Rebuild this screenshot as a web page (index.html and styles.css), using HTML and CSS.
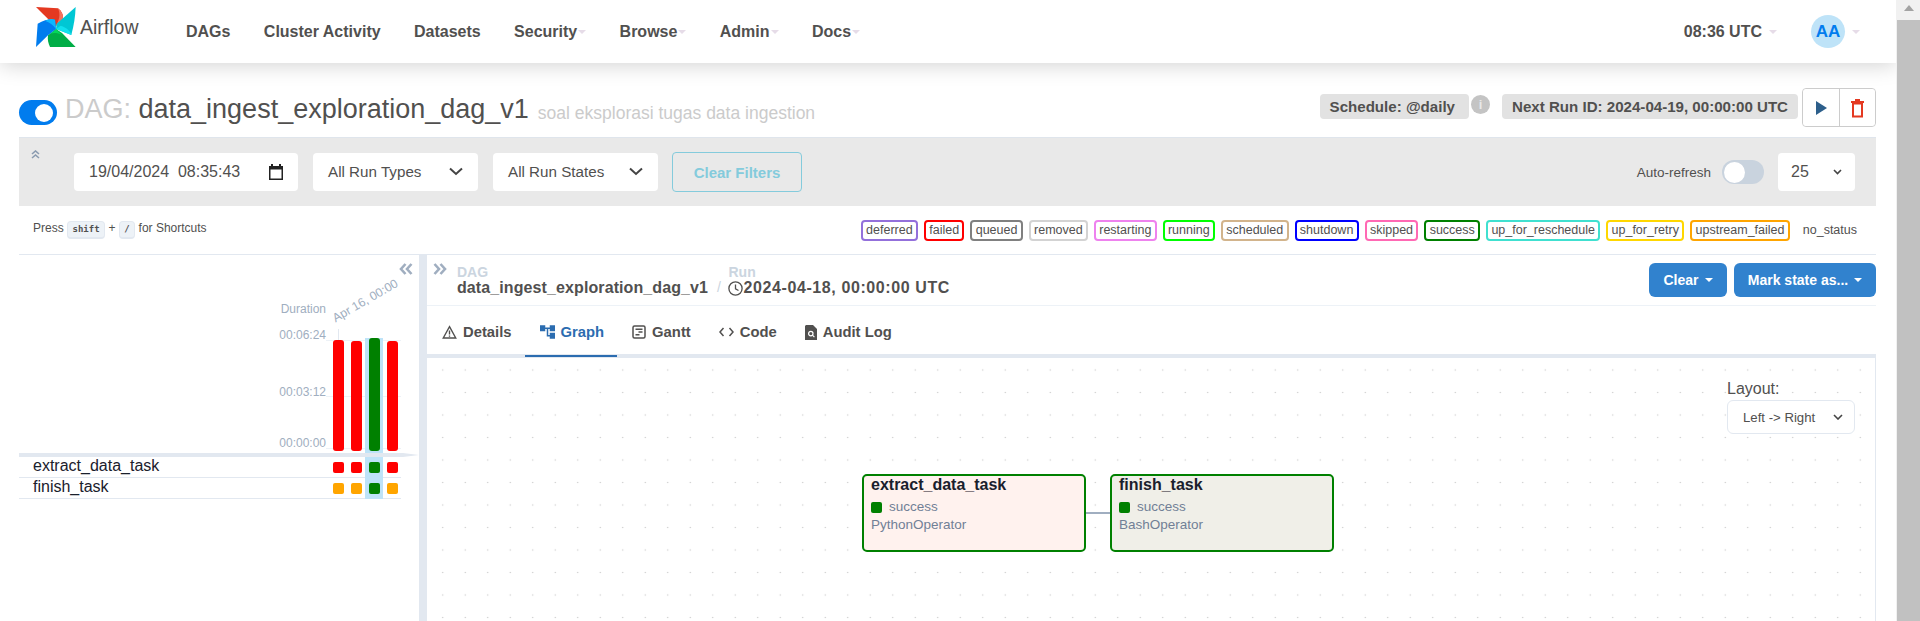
FILE: index.html
```html
<!DOCTYPE html>
<html lang="en">

<head>
  <meta charset="UTF-8">
  <title>Airflow - data_ingest_exploration_dag_v1</title>
  <link rel="stylesheet" href="styles.css">
</head>

<body>
  <div class="page">
    <!-- Top navigation -->
    <nav class="navbar">
      <a class="brand">
        <svg class="logo" viewBox="0 0 120 120">
          <path d="M0 0 L66 4 C76 12 82 22 81 32 C76 44 68 52 58 58 Z" fill="#e43921" />
          <path d="M66 4 C76 12 82 22 81 32 C76 44 68 52 58 58 C70 42 74 22 66 4 Z" fill="#f4725f" />
          <path d="M119 0 L62 50 L60 66 L106 84 C114 54 118 26 119 0 Z" fill="#00c7d4" />
          <path d="M60 66 L106 84 C104 72 92 62 74 56 Z" fill="#11e1ee" />
          <path d="M119 120 L78 78 L60 66 L36 85 C34 98 37 110 42 120 Z" fill="#00ad46" />
          <path d="M60 66 L36 85 C46 76 62 76 78 84 Z" fill="#04d659" />
          <path d="M0 120 L5 50 C25 38 45 35 57 38 L60 66 L36 85 Z" fill="#017cee" />
          <path d="M28 42 C38 36 50 35 57 38 L60 66 C52 54 40 46 28 42 Z" fill="#0cb6ff" />
        </svg>
        <span>Airflow</span>
      </a>
      <ul class="nav-links">
        <li>DAGs</li>
        <li>Cluster Activity</li>
        <li>Datasets</li>
        <li>Security<i class="caret"></i></li>
        <li>Browse<i class="caret"></i></li>
        <li>Admin<i class="caret"></i></li>
        <li>Docs<i class="caret"></i></li>
      </ul>
      <div class="nav-right">
        <span class="clock">08:36 UTC<i class="caret wide"></i></span>
        <span class="avatar">AA</span><i class="caret wide"></i>
      </div>
    </nav>

    <div class="content">
      <!-- DAG title row -->
      <header class="dag-title">
        <span class="switch on"><i></i></span>
        <h3><span class="muted">DAG:</span> data_ingest_exploration_dag_v1</h3>
        <span class="description">soal eksplorasi tugas data ingestion</span>
        <div class="dag-actions">
          <span class="badge schedule">Schedule: @daily</span>
          <span class="info">i</span>
          <span class="badge">Next Run ID: 2024-04-19, 00:00:00 UTC</span>
          <div class="btn-group">
            <button>
              <svg width="13" height="16" viewBox="0 0 13 16"><path d="M1 1 L12 8 L1 15 Z" fill="#2d5f8b" /></svg>
            </button>
            <button>
              <svg width="15" height="20" viewBox="0 0 15 20" fill="none" stroke="#e43921" stroke-width="2">
                <path d="M3 5.5 V18.5 H12 V5.5 Z M1 4 H14" />
                <path d="M5 2 H10" />
              </svg>
            </button>
          </div>
        </div>
      </header>

      <!-- Filters -->
      <section class="filters">
        <svg class="filters-toggle" width="9" height="9" viewBox="0 0 9 9" fill="none" stroke="#8a9bb0" stroke-width="1.6">
          <path d="M1 4 L4.5 1 L8 4 M1 8 L4.5 5 L8 8" />
        </svg>
        <div class="field date-field">
          <span>19/04/2024&nbsp; 08:35:43</span>
          <svg width="14" height="16" viewBox="0 0 14 16">
            <path d="M2 0 H4 V2 H10 V0 H12 V2 H14 V16 H0 V2 H2 Z M1.5 5.5 V14.5 H12.5 V5.5 Z" fill="#222" />
          </svg>
        </div>
        <div class="field select-field"><span>All Run Types</span><svg class="chevron" width="14" height="9" viewBox="0 0 14 9"><path d="M1 1.5 L7 7 L13 1.5" /></svg></div>
        <div class="field select-field"><span>All Run States</span><svg class="chevron" width="14" height="9" viewBox="0 0 14 9"><path d="M1 1.5 L7 7 L13 1.5" /></svg></div>
        <button class="clear-filters">Clear Filters</button>
        <div class="filters-right">
          <span class="refresh-label">Auto-refresh</span>
          <span class="switch"><i></i></span>
          <div class="field count-field"><span>25</span><svg class="chevron small" width="9" height="6" viewBox="0 0 9 6"><path d="M1 1 L4.5 4.5 L8 1" /></svg></div>
        </div>
      </section>

      <!-- Shortcuts and state legend -->
      <section class="legend-row">
        <div class="shortcuts">Press <kbd>shift</kbd> + <kbd>/</kbd> for Shortcuts</div>
        <ul class="legend">
          <li style="border-color: mediumpurple">deferred</li>
          <li style="border-color: red">failed</li>
          <li style="border-color: gray">queued</li>
          <li style="border-color: lightgrey">removed</li>
          <li style="border-color: violet">restarting</li>
          <li style="border-color: lime">running</li>
          <li style="border-color: tan">scheduled</li>
          <li style="border-color: blue">shutdown</li>
          <li style="border-color: hotpink">skipped</li>
          <li style="border-color: green">success</li>
          <li style="border-color: turquoise">up_for_reschedule</li>
          <li style="border-color: gold">up_for_retry</li>
          <li style="border-color: orange">upstream_failed</li>
          <li class="no-status">no_status</li>
        </ul>
      </section>

      <main class="workspace">
        <!-- Left: grid of runs -->
        <aside class="grid-panel">
          <div class="chart">
            <svg class="collapse" width="14" height="12" viewBox="0 0 14 12" fill="none" stroke="#a0aec0" stroke-width="2.6">
              <path d="M6.5 1 L2 6 L6.5 11 M12.5 1 L8 6 L12.5 11" />
            </svg>
            <span class="run-date">Apr 16, 00:00</span>
            <i class="run-tick"></i>
            <div class="axis">
              <span class="axis-title">Duration</span>
              <span class="axis-top">00:06:24</span>
              <span class="axis-mid">00:03:12</span>
              <span class="axis-low">00:00:00</span>
            </div>
            <div class="bars">
              <i class="gridline one"></i><i class="gridline two"></i><i class="gridline three"></i>
              <div class="bar-col"><i class="bar failed" style="height: 111px"></i></div>
              <div class="bar-col"><i class="bar failed" style="height: 110px"></i></div>
              <div class="bar-col selected"><i class="bar success" style="height: 113px"></i></div>
              <div class="bar-col"><i class="bar failed" style="height: 110px"></i></div>
            </div>
          </div>
          <div class="chart-rule"></div>
          <div class="task-row">
            <span class="task-name">extract_data_task</span>
            <div class="cell"><i class="square failed"></i></div>
            <div class="cell"><i class="square failed"></i></div>
            <div class="cell selected"><i class="square success"></i></div>
            <div class="cell"><i class="square failed"></i></div>
          </div>
          <div class="task-row">
            <span class="task-name">finish_task</span>
            <div class="cell"><i class="square upstream"></i></div>
            <div class="cell"><i class="square upstream"></i></div>
            <div class="cell selected"><i class="square success"></i></div>
            <div class="cell"><i class="square upstream"></i></div>
          </div>
        </aside>

        <div class="divider"></div>

        <!-- Right: details -->
        <section class="details">
          <div class="breadcrumb-row">
            <svg class="expand" width="14" height="12" viewBox="0 0 14 12" fill="none" stroke="#a0aec0" stroke-width="2.6">
              <path d="M1.5 1 L6 6 L1.5 11 M7.5 1 L12 6 L7.5 11" />
            </svg>
            <div class="crumb">
              <span class="crumb-label">DAG</span>
              <span class="crumb-value">data_ingest_exploration_dag_v1</span>
            </div>
            <span class="crumb-slash">/</span>
            <div class="crumb">
              <span class="crumb-label">Run</span>
              <span class="crumb-value with-icon">
                <svg width="15" height="15" viewBox="0 0 15 15" fill="none" stroke="#51504f" stroke-width="1.3">
                  <circle cx="7.5" cy="7.5" r="6.6" />
                  <path d="M7.5 3.5 V7.8 L10.5 9.5" />
                </svg>2024-04-18, 00:00:00 UTC</span>
            </div>
            <div class="run-actions">
              <button class="btn-blue clear-btn">Clear<i class="caret white"></i></button>
              <button class="btn-blue mark-btn">Mark state as...<i class="caret white"></i></button>
            </div>
          </div>

          <div class="tabs">
            <a class="tab">
              <svg width="15" height="14" viewBox="0 0 24 22" fill="none" stroke="currentColor" stroke-width="2.2">
                <path d="M12 2.5 L22 20.5 H2 Z" />
                <path d="M12 8.5 V15 M12 16.5 V18.5" />
              </svg>Details</a>
            <a class="tab active">
              <svg width="15" height="14" viewBox="2 3 20 18" fill="currentColor">
                <path d="M22 11V3h-7v3H9V3H2v8h7V8h2v10h4v3h7v-8h-7v3h-2V8h2v3z" />
              </svg>Graph</a>
            <a class="tab">
              <svg width="14" height="14" viewBox="0 0 14 14" fill="none" stroke="currentColor" stroke-width="1.5">
                <rect x="1" y="1" width="12" height="12" rx="1.5" />
                <path d="M3.5 4.3 H10.5 M6.5 7 H10.5 M3.5 9.7 H7.5" />
              </svg>Gantt</a>
            <a class="tab">
              <svg width="15" height="12" viewBox="0 0 15 12" fill="none" stroke="currentColor" stroke-width="1.5">
                <path d="M4.5 2 L1 6 L4.5 10 M10.5 2 L14 6 L10.5 10" />
              </svg>Code</a>
            <a class="tab">
              <svg width="12" height="15" viewBox="0 0 12 15">
                <path d="M1 0 H8 L12 4 V15 H0 V1 Z" fill="currentColor" />
                <circle cx="5.8" cy="8.6" r="2.2" fill="none" stroke="#fff" stroke-width="1.2" />
                <path d="M7.4 10.2 L9.4 12.2" stroke="#fff" stroke-width="1.2" />
              </svg>Audit Log</a>
          </div>

          <div class="canvas">
            <div class="layout-control">
              <label>Layout:</label>
              <div class="field layout-select"><span>Left -&gt; Right</span><svg class="chevron small" width="10" height="6" viewBox="0 0 10 6"><path d="M1 1 L5 5 L9 1" /></svg></div>
            </div>
            <div class="node python-node">
              <b>extract_data_task</b>
              <span class="node-state"><i></i>success</span>
              <span class="node-op">PythonOperator</span>
            </div>
            <div class="edge"></div>
            <div class="node bash-node">
              <b>finish_task</b>
              <span class="node-state"><i></i>success</span>
              <span class="node-op">BashOperator</span>
            </div>
          </div>
        </section>
      </main>
    </div>
  </div>

  <!-- Browser scrollbar -->
  <div class="scrollbar">
    <i class="scroll-arrow"></i>
    <i class="scroll-thumb"></i>
  </div>
</body>

</html>
```

FILE: styles.css
```css
* {
  box-sizing: border-box;
}

body {
  margin: 0;
  height: 621px;
  overflow: hidden;
  display: flex;
  font-family: "Liberation Sans", Arial, sans-serif;
  font-size: 14px;
  color: #51504f;
  background: #fff;
}

i {
  display: block;
  font-style: normal;
}

ul {
  list-style: none;
  margin: 0;
  padding: 0;
}

button {
  font-family: inherit;
}

.page {
  width: 1896px;
  display: flex;
  flex-direction: column;
}

/* navbar */
.navbar {
  height: 63px;
  flex: none;
  display: flex;
  align-items: center;
  background: #fff;
  box-shadow: 0 2px 20px rgba(0, 0, 0, 0.18);
  position: relative;
  z-index: 2;
  padding: 0 36px 0 36px;
}

.brand {
  display: flex;
  align-items: center;
  width: 133px;
  font-size: 19.5px;
  margin-top: -1px;
}

.logo {
  width: 40px;
  height: 40px;
  flex: none;
  margin-right: 4px;
  margin-top: -9px;
}

.brand span {
  margin-top: -8px;
}

.nav-links {
  display: flex;
  font-size: 16px;
  font-weight: bold;
}

.nav-links li {
  display: flex;
  align-items: center;
  padding: 0 16.7px;
}

.nav-links li:first-child {
  padding-left: 17px;
}

.caret {
  width: 0;
  height: 0;
  margin-left: 1px;
  border-top: 4px solid #e6dce8;
  border-left: 4px solid transparent;
  border-right: 4px solid transparent;
}

.caret.wide {
  margin-left: 7px;
}

.caret.white {
  margin-left: 6px;
  border-top-color: #fff;
}

.nav-right {
  margin-left: auto;
  display: flex;
  align-items: center;
  font-size: 16px;
  font-weight: bold;
}

.clock {
  display: flex;
  align-items: center;
  margin-right: 34px;
}

.avatar {
  width: 34px;
  height: 33px;
  border-radius: 50%;
  background: #bee3f8;
  color: #017cee;
  font-size: 17px;
  display: flex;
  align-items: center;
  justify-content: center;
}

/* page body */
.content {
  flex: 1;
  display: flex;
  flex-direction: column;
  padding: 0 20px 0 19px;
  min-height: 0;
}

.dag-title {
  height: 74px;
  flex: none;
  display: flex;
  align-items: flex-start;
  padding-top: 25px;
}

.switch {
  width: 38px;
  height: 25px;
  border-radius: 13px;
  background: #cbd5e0;
  display: flex;
  align-items: center;
  padding: 0 4px;
  flex: none;
}

.switch i {
  width: 18px;
  height: 18px;
  border-radius: 50%;
  background: #fff;
}

.dag-title .switch.on {
  background: #017cee;
  justify-content: flex-end;
  margin-top: 12px;
}

.dag-title h3 {
  margin: 3px 0 0 8px;
  font-size: 27px;
  line-height: 36px;
  font-weight: normal;
  white-space: nowrap;
}

.muted {
  color: #cbcbcb;
}

.description {
  margin: 11px 0 0 9px;
  font-size: 17.5px;
  line-height: 28px;
  color: #cbcbcb;
}

.dag-actions {
  margin-left: auto;
  display: flex;
  align-items: flex-start;
}

.badge {
  margin-top: 6px;
  height: 25px;
  padding: 0 10px;
  background: #e2e2e2;
  border-radius: 4px;
  font-size: 15.1px;
  font-weight: bold;
  line-height: 25px;
  white-space: nowrap;
}

.badge.schedule {
  padding-right: 14px;
}

.info {
  margin: 7px 12px 0 2px;
  width: 19px;
  height: 19px;
  border-radius: 50%;
  background: #c4c4c4;
  color: #e9e9e9;
  font-size: 13px;
  font-weight: bold;
  text-align: center;
  line-height: 19px;
}

.btn-group {
  margin-left: 4px;
  display: flex;
  height: 39px;
  border: 1px solid #ccc;
  border-radius: 4px;
}

.btn-group button {
  width: 36px;
  background: #fff;
  border: 0;
  border-radius: 4px;
  padding: 0;
  display: flex;
  align-items: center;
  justify-content: center;
}

.btn-group button + button {
  border-left: 1px solid #ccc;
  border-radius: 0 4px 4px 0;
}

/* filters */
.filters {
  height: 69px;
  flex: none;
  display: flex;
  align-items: center;
  background: #e9e9e9;
  border-top: 1px solid #dfe5ec;
  padding: 0 21px 0 12px;
  position: relative;
}

.filters-toggle {
  align-self: flex-start;
  margin: 12px 34px 0 0;
}

.field {
  height: 38px;
  background: #fff;
  border-radius: 4px;
  display: flex;
  align-items: center;
  justify-content: space-between;
  font-size: 16px;
  color: #51504f;
  padding: 0 15px;
}

.date-field {
  width: 224px;
}

.select-field {
  width: 165px;
  margin-left: 15px;
  font-size: 15.2px;
  padding-bottom: 1px;
}

.chevron {
  fill: none;
  stroke: #444;
  stroke-width: 2;
}

.chevron.small {
  stroke-width: 1.6;
}

.clear-filters {
  margin-left: 14px;
  width: 130px;
  height: 40px;
  background: transparent;
  border: 1px solid #84cbdc;
  border-radius: 4px;
  color: #84cbdc;
  font-size: 15px;
  font-weight: bold;
  padding: 0;
}

.filters-right {
  margin-left: auto;
  display: flex;
  align-items: center;
}

.refresh-label {
  font-size: 13.5px;
  margin-right: 11px;
}

.filters-right .switch {
  width: 42px;
  height: 24px;
  background: #c9d3de;
  padding: 0 2px;
}

.filters-right .switch i {
  width: 21px;
  height: 21px;
}

.count-field {
  width: 77px;
  margin-left: 14px;
  padding: 0 13px;
}

/* legend */
.legend-row {
  height: 48px;
  flex: none;
  display: flex;
  align-items: center;
  justify-content: space-between;
  padding: 0 19px 0 14px;
  font-size: 12px;
}

kbd {
  display: inline-block;
  font-family: "DejaVu Sans Mono", "Liberation Mono", monospace;
  font-size: 9px;
  line-height: 15px;
  font-weight: bold;
  padding: 0 4.5px;
  background: #edf2f7;
  border: 1px solid #e2e8f0;
  border-bottom-width: 2px;
  border-radius: 4px;
}

.legend {
  display: flex;
  gap: 6px;
  font-size: 12.5px;
}

.legend li {
  height: 21px;
  line-height: 17px;
  border: 2px solid;
  border-radius: 4px;
  padding: 0 3.3px;
  white-space: nowrap;
}

.legend .no-status {
  border: 0;
  line-height: 21px;
  padding: 0 0 0 7px;
}

/* main split */
.workspace {
  flex: 1;
  min-height: 0;
  display: flex;
  border-top: 1px solid #e2e8f0;
}

.grid-panel {
  width: 400px;
  flex: none;
}

.divider {
  width: 8px;
  flex: none;
  background: #e2e8f0;
}

.chart {
  height: 198px;
  display: flex;
  justify-content: flex-end;
  padding-right: 18px;
  position: relative;
}

.collapse {
  position: absolute;
  top: 8px;
  right: 6px;
}

.run-date {
  position: absolute;
  left: 318px;
  top: 56px;
  font-size: 12.2px;
  color: #a0aec0;
  white-space: nowrap;
  transform: rotate(-30deg);
  transform-origin: left bottom;
}

.run-tick {
  position: absolute;
  left: 319px;
  top: 74px;
  width: 1px;
  height: 11px;
  background: #e2e8f0;
}

.axis {
  width: 46px;
  margin-right: 3px;
  color: #a0aec0;
  font-size: 12px;
  display: flex;
  flex-direction: column;
  align-items: flex-end;
  padding-top: 47px;
  line-height: 14px;
  white-space: nowrap;
}

.axis-top {
  margin-top: 12px;
}

.axis-mid {
  margin-top: 43px;
}

.axis-low {
  margin-top: 37px;
}

.bars {
  display: flex;
  position: relative;
  width: 72px;
}

.gridline {
  position: absolute;
  left: -3px;
  right: 0;
  height: 1px;
  background: #edf2f7;
}

.gridline.one {
  top: 85px;
}

.gridline.two {
  top: 141px;
}

.gridline.three {
  top: 193px;
}

.bar-col {
  width: 18px;
  display: flex;
  flex-direction: column;
  justify-content: flex-end;
  align-items: center;
  padding-bottom: 2px;
  position: relative;
}

.bar-col.selected {
  background: linear-gradient(transparent 83px, #bee3f8 83px);
}

.bar {
  width: 11px;
  border-radius: 3px;
}

.failed {
  background: red;
}

.success {
  background: green;
}

.upstream {
  background: orange;
}

.chart-rule {
  height: 4px;
  background: #e2e8f0;
  clip-path: polygon(0 0, 96% 0, 100% 50%, 96% 100%, 0 100%);
}

.task-row {
  height: 21px;
  display: flex;
  padding-right: 18px;
  position: relative;
}

.task-row::after {
  content: "";
  position: absolute;
  left: 0;
  right: 18px;
  bottom: 0;
  height: 1px;
  background: #e2e8f0;
}

.task-name {
  flex: 1;
  padding-left: 14px;
  font-size: 16px;
  line-height: 17px;
  color: #1a202c;
}

.cell {
  width: 18px;
  display: flex;
  align-items: center;
  justify-content: center;
  padding-bottom: 1px;
  position: relative;
  z-index: 1;
}

.cell.selected {
  background: #bee3f8;
}

.square {
  width: 11px;
  height: 11px;
  border-radius: 2px;
}

/* details panel */
.details {
  flex: 1;
  min-width: 0;
  display: flex;
  flex-direction: column;
}

.breadcrumb-row {
  height: 51px;
  flex: none;
  display: flex;
  align-items: flex-start;
  border-bottom: 1px solid #edf2f7;
  padding: 8px 0 0 6px;
}

.expand {
  flex: none;
}

.crumb {
  margin-left: 10px;
  display: flex;
  flex-direction: column;
  margin-top: 2px;
}

.crumb-label {
  font-size: 14px;
  line-height: 14px;
  font-weight: bold;
  color: #cbd5e0;
}

.crumb-value {
  font-size: 16px;
  line-height: 18px;
  font-weight: bold;
  letter-spacing: 0.1px;
  white-space: nowrap;
}

.with-icon {
  display: flex;
  align-items: center;
  letter-spacing: 0.6px;
}

.crumb-slash {
  margin: 16px -2.5px 0 9px;
  color: #cbd5e0;
  font-size: 14px;
}

.run-actions {
  margin-left: auto;
  display: flex;
  gap: 7px;
  margin-top: 0;
}

.btn-blue {
  height: 34px;
  background: #3182ce;
  color: #fff;
  border: 0;
  border-radius: 6px;
  font-size: 14px;
  font-weight: bold;
  display: flex;
  align-items: center;
  justify-content: center;
  padding: 0;
}

.clear-btn {
  width: 78px;
}

.mark-btn {
  width: 142px;
}

.tabs {
  height: 48px;
  flex: none;
  display: flex;
  position: relative;
  z-index: 1;
}

.tab {
  height: 51px;
  display: flex;
  align-items: center;
  gap: 6px;
  padding: 3px 13px 0 15px;
  font-size: 14.8px;
  font-weight: bold;
  border-bottom: 2px solid transparent;
}

.tab svg {
  flex: none;
}

.tab.active {
  color: #2b6cb0;
  border-bottom-color: #2b6cb0;
}

.canvas {
  flex: 1;
  position: relative;
  min-height: 0;
  border-top: 4px solid #e2e8f0;
  border-right: 1px solid #e2e8f0;
  background-image: radial-gradient(circle, #c8c8c8 0.8px, transparent 1px);
  background-size: 22.5px 22.5px;
  background-position: 4.5px 0.75px;
}

.layout-control {
  position: absolute;
  top: 20px;
  right: 20px;
  width: 128px;
  font-size: 16px;
}

.layout-control label {
  display: block;
  line-height: 22px;
}

.layout-select {
  height: 34px;
  background: #fff;
  border: 1px solid #e2e8f0;
  border-radius: 6px;
  font-size: 13.2px;
  padding: 0 11px 0 15px;
}

.node {
  position: absolute;
  top: 116px;
  width: 224px;
  height: 78px;
  border: 2px solid green;
  border-radius: 5px;
  padding: 0 7px;
  display: flex;
  flex-direction: column;
  font-size: 13.5px;
  color: #718096;
}

.python-node {
  left: 435px;
  background: #fff2ee;
}

.bash-node {
  left: 683px;
  background: #f0efe8;
}

.node b {
  font-size: 16px;
  line-height: 18px;
  color: #1a202c;
}

.node-state {
  display: flex;
  align-items: center;
  gap: 7px;
  line-height: 18px;
  margin-top: 4px;
}

.node-state i {
  flex: none;
  width: 11px;
  height: 11px;
  border-radius: 2px;
  background: green;
}

.node-op {
  line-height: 18px;
}

.edge {
  position: absolute;
  top: 154px;
  left: 659px;
  width: 24px;
  height: 2px;
  background: #a0aec0;
}

/* scrollbar */
.scrollbar {
  flex: 1;
  background: #f1f1f1;
  padding-left: 1px;
  position: relative;
  z-index: 3;
}

.scroll-arrow {
  width: 0;
  height: 0;
  margin: 5px auto 0;
  border-bottom: 6px solid #a3a3a3;
  border-left: 5px solid transparent;
  border-right: 5px solid transparent;
}

.scroll-thumb {
  margin-top: 9px;
  height: 601px;
  background: #c1c1c1;
}
```
